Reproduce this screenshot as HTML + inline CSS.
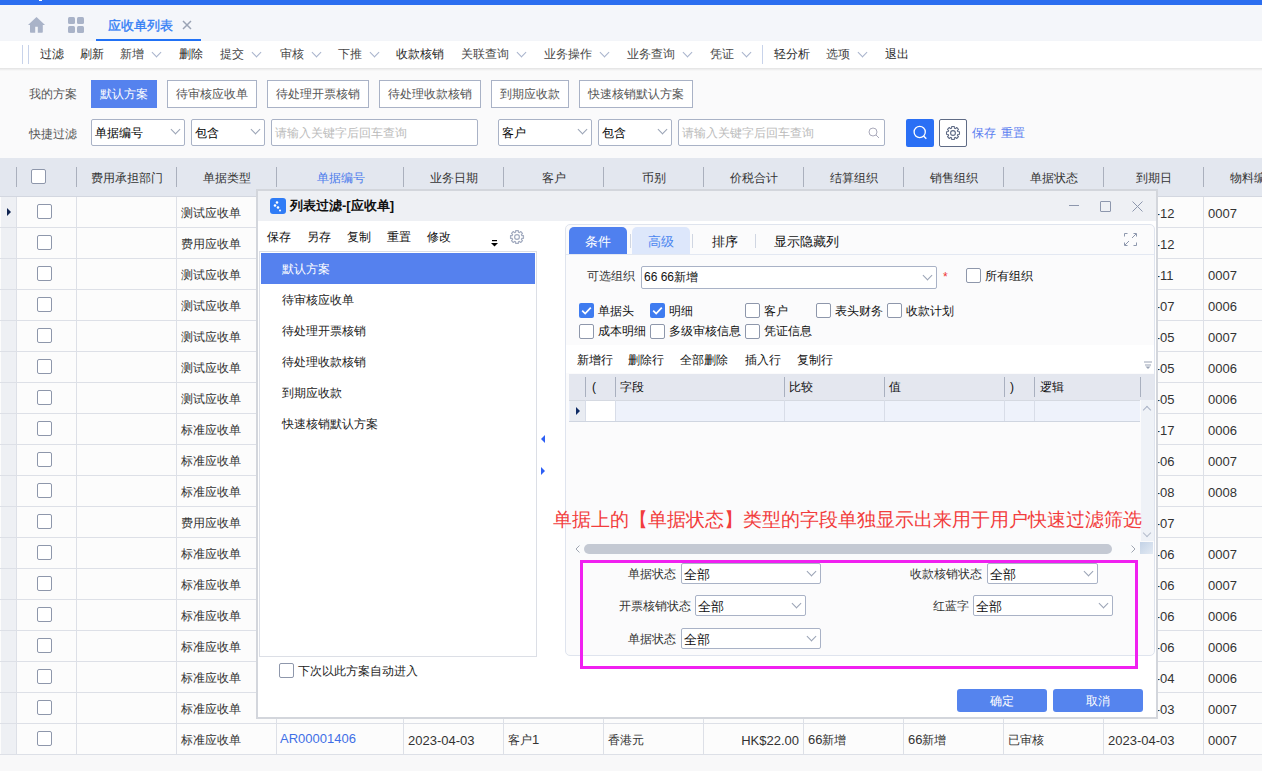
<!DOCTYPE html>
<html><head><meta charset="utf-8"><style>
*{box-sizing:border-box;margin:0;padding:0}
html,body{width:1262px;height:771px;overflow:hidden}
body{position:relative;background:#f8f8f9;font-family:"Liberation Sans",sans-serif;font-size:12px;color:#333}
.a{position:absolute}
.t{position:absolute;white-space:nowrap;line-height:16px}
.chev{position:absolute;width:7px;height:7px;border-right:1px solid #9aa3b5;border-bottom:1px solid #9aa3b5;transform:rotate(45deg)}
.btn{position:absolute;top:80px;height:28px;border:1px solid #a9b2c6;background:#fff;color:#555;text-align:center;line-height:26px;font-size:12px;white-space:nowrap}
.sel{position:absolute;top:119px;height:27px;border:1px solid #a9b2c6;border-radius:2px;background:#fff;line-height:27px;padding-left:3px;font-size:12px;color:#000;white-space:nowrap}
.hd{position:absolute;top:166px;width:1px;height:22px;background:#c4c9d4}
.ht{position:absolute;top:159px;height:38px;line-height:38px;text-align:center;font-size:12px;color:#333;white-space:nowrap}
.cb{position:absolute;width:15px;height:15px;border:1px solid #8e97ab;border-radius:2px;background:#fff}
</style></head><body>
<div class="a" style="left:0px;top:0px;width:1262px;height:5px;background:#2b6ef0"></div>
<div class="a" style="left:0px;top:5px;width:1262px;height:36px;background:#f4f6fa"></div>
<div class="a" style="left:39px;top:0px;width:3px;height:1px;background:#fff"></div>
<svg class="a" style="left:27px;top:16px" width="19" height="18" viewBox="0 0 19 18"><path d="M9.5 1 L1 8.9 L3 8.9 L3 16 Q3 16.8 3.8 16.8 L8.2 16.8 L8.2 10.8 L10.8 10.8 L10.8 16.8 L15 16.8 Q15.8 16.8 15.8 16 L15.8 8.9 L18 8.9 Z" fill="#a9b3c8"/></svg>
<svg class="a" style="left:68px;top:17px" width="16" height="16" viewBox="0 0 16 16"><rect x="0" y="0" width="7" height="7" rx="1.5" fill="#a9b3c8"/><rect x="9" y="0" width="7" height="7" rx="1.5" fill="#a9b3c8"/><rect x="0" y="9" width="7" height="7" rx="1.5" fill="#a9b3c8"/><rect x="9" y="9" width="7" height="7" rx="1.5" fill="#a9b3c8"/></svg>
<div class="t" style="left:108px;top:18px;font-size:13px;color:#3580f5;-webkit-text-stroke:0.35px #3580f5">应收单列表</div>
<svg class="a" style="left:182px;top:20px" width="10" height="10" viewBox="0 0 10 10"><path d="M1 1L9 9M9 1L1 9" stroke="#9aa3b4" stroke-width="1.5"/></svg>
<div class="a" style="left:96px;top:39px;width:105px;height:2px;background:#2272f6"></div>
<div class="a" style="left:0px;top:41px;width:1262px;height:27px;background:#fff;box-shadow:0 1px 2px rgba(0,0,0,0.08)"></div>
<div class="a" style="left:22px;top:45px;width:1px;height:19px;background:#c8d3ea"></div>
<div class="a" style="left:28px;top:45px;width:1px;height:19px;background:#c8d3ea"></div>
<div class="t" style="left:40px;top:46px;font-size:12px;color:#2a2a2a">过滤</div>
<div class="t" style="left:80px;top:46px;font-size:12px;color:#2a2a2a">刷新</div>
<div class="t" style="left:120px;top:46px;font-size:12px;color:#474747">新增</div>
<div class="chev" style="left:153px;top:49px;width:7px;height:7px;border-color:#a8b3cc"></div>
<div class="t" style="left:179px;top:46px;font-size:12px;color:#2a2a2a">删除</div>
<div class="t" style="left:220px;top:46px;font-size:12px;color:#474747">提交</div>
<div class="chev" style="left:253px;top:49px;width:7px;height:7px;border-color:#a8b3cc"></div>
<div class="t" style="left:280px;top:46px;font-size:12px;color:#474747">审核</div>
<div class="chev" style="left:313px;top:49px;width:7px;height:7px;border-color:#a8b3cc"></div>
<div class="t" style="left:338px;top:46px;font-size:12px;color:#474747">下推</div>
<div class="chev" style="left:371px;top:49px;width:7px;height:7px;border-color:#a8b3cc"></div>
<div class="t" style="left:396px;top:46px;font-size:12px;color:#2a2a2a">收款核销</div>
<div class="t" style="left:461px;top:46px;font-size:12px;color:#474747">关联查询</div>
<div class="chev" style="left:518px;top:49px;width:7px;height:7px;border-color:#a8b3cc"></div>
<div class="t" style="left:544px;top:46px;font-size:12px;color:#474747">业务操作</div>
<div class="chev" style="left:601px;top:49px;width:7px;height:7px;border-color:#a8b3cc"></div>
<div class="t" style="left:627px;top:46px;font-size:12px;color:#474747">业务查询</div>
<div class="chev" style="left:684px;top:49px;width:7px;height:7px;border-color:#a8b3cc"></div>
<div class="t" style="left:710px;top:46px;font-size:12px;color:#474747">凭证</div>
<div class="chev" style="left:743px;top:49px;width:7px;height:7px;border-color:#a8b3cc"></div>
<div class="t" style="left:774px;top:46px;font-size:12px;color:#2a2a2a">轻分析</div>
<div class="t" style="left:826px;top:46px;font-size:12px;color:#474747">选项</div>
<div class="chev" style="left:859px;top:49px;width:7px;height:7px;border-color:#a8b3cc"></div>
<div class="t" style="left:885px;top:46px;font-size:12px;color:#2a2a2a">退出</div>
<div class="a" style="left:762px;top:45px;width:1px;height:19px;background:#c8d3ea"></div>
<div class="a" style="left:0px;top:68px;width:1262px;height:90px;background:#fafafb"></div>
<div class="a" style="left:0px;top:68px;width:1262px;height:3px;background:linear-gradient(#e2e2e2,#fafafb)"></div>
<div class="t" style="left:29px;top:86px;color:#555">我的方案</div>
<div class="btn" style="left:91px;width:66px;background:#5582ee;border-color:#5582ee;color:#fff">默认方案</div>
<div class="btn" style="left:167px;width:90px;">待审核应收单</div>
<div class="btn" style="left:267px;width:102px;">待处理开票核销</div>
<div class="btn" style="left:379px;width:102px;">待处理收款核销</div>
<div class="btn" style="left:491px;width:78px;">到期应收款</div>
<div class="btn" style="left:579px;width:114px;">快速核销默认方案</div>
<div class="t" style="left:29px;top:126px;color:#555">快捷过滤</div>
<div class="sel" style="left:91px;width:94px;">单据编号<div class="chev" style="right:5px;top:6px"></div></div>
<div class="sel" style="left:191px;width:74px;">包含<div class="chev" style="right:5px;top:6px"></div></div>
<div class="sel" style="left:271px;width:207px;color:#bbb">请输入关键字后回车查询</div>
<div class="sel" style="left:498px;width:94px;">客户<div class="chev" style="right:5px;top:6px"></div></div>
<div class="sel" style="left:598px;width:74px;">包含<div class="chev" style="right:5px;top:6px"></div></div>
<div class="sel" style="left:678px;width:207px;color:#bbb">请输入关键字后回车查询<svg class="a" style="right:4px;top:7px" width="12" height="12" viewBox="0 0 12 12"><circle cx="5" cy="5" r="4" fill="none" stroke="#aab" stroke-width="1"/><path d="M8 8L11 11" stroke="#aab" stroke-width="1"/></svg></div>
<div class="a" style="left:906px;top:119px;width:28px;height:28px;background:#2a6ff5;border-radius:2px"></div>
<svg class="a" style="left:912px;top:125px" width="16" height="16" viewBox="0 0 16 16"><circle cx="7.7" cy="7" r="5.6" fill="none" stroke="#fff" stroke-width="1.3"/><path d="M11.6 11L14.3 13.7" stroke="#fff" stroke-width="1.4"/></svg>
<div class="a" style="left:939px;top:119px;width:28px;height:28px;border:1px solid #5f6b85;border-radius:2px;background:#fff"></div>
<svg class="a" style="left:945px;top:125px" width="16" height="16" viewBox="0 0 16 16"><path d="M6.57 3.21 L6.71 1.53 L9.29 1.53 L9.43 3.21 L10.37 3.60 L11.67 2.51 L13.49 4.33 L12.40 5.63 L12.79 6.57 L14.47 6.71 L14.47 9.29 L12.79 9.43 L12.40 10.37 L13.49 11.67 L11.67 13.49 L10.37 12.40 L9.43 12.79 L9.29 14.47 L6.71 14.47 L6.57 12.79 L5.63 12.40 L4.33 13.49 L2.51 11.67 L3.60 10.37 L3.21 9.43 L1.53 9.29 L1.53 6.71 L3.21 6.57 L3.60 5.63 L2.51 4.33 L4.33 2.51 L5.63 3.60Z" fill="none" stroke="#5f6b85" stroke-width="1.1" stroke-linejoin="round"/><circle cx="8" cy="8" r="2.4" fill="none" stroke="#5f6b85" stroke-width="1.1"/></svg>
<div class="t" style="left:972px;top:125px;color:#5b7ef0">保存</div>
<div class="t" style="left:1001px;top:125px;color:#5b7ef0">重置</div>
<div class="a" style="left:0px;top:158px;width:1262px;height:38px;background:#e3e7ef"></div>
<div class="a" style="left:16px;top:167px;width:1px;height:20px;background:#aab0bd"></div>
<div class="a" style="left:76px;top:167px;width:1px;height:20px;background:#aab0bd"></div>
<div class="a" style="left:176px;top:167px;width:1px;height:20px;background:#aab0bd"></div>
<div class="a" style="left:276px;top:167px;width:1px;height:20px;background:#aab0bd"></div>
<div class="a" style="left:403px;top:167px;width:1px;height:20px;background:#aab0bd"></div>
<div class="a" style="left:503px;top:167px;width:1px;height:20px;background:#aab0bd"></div>
<div class="a" style="left:603px;top:167px;width:1px;height:20px;background:#aab0bd"></div>
<div class="a" style="left:703px;top:167px;width:1px;height:20px;background:#aab0bd"></div>
<div class="a" style="left:803px;top:167px;width:1px;height:20px;background:#aab0bd"></div>
<div class="a" style="left:903px;top:167px;width:1px;height:20px;background:#aab0bd"></div>
<div class="a" style="left:1003px;top:167px;width:1px;height:20px;background:#aab0bd"></div>
<div class="a" style="left:1103px;top:167px;width:1px;height:20px;background:#aab0bd"></div>
<div class="a" style="left:1203px;top:167px;width:1px;height:20px;background:#aab0bd"></div>
<div class="ht" style="left:77px;width:100px;color:#333">费用承担部门</div>
<div class="ht" style="left:177px;width:100px;color:#333">单据类型</div>
<div class="ht" style="left:277px;width:127px;color:#4b7bec">单据编号</div>
<div class="ht" style="left:404px;width:100px;color:#333">业务日期</div>
<div class="ht" style="left:504px;width:100px;color:#333">客户</div>
<div class="ht" style="left:604px;width:100px;color:#333">币别</div>
<div class="ht" style="left:704px;width:100px;color:#333">价税合计</div>
<div class="ht" style="left:804px;width:100px;color:#333">结算组织</div>
<div class="ht" style="left:904px;width:100px;color:#333">销售组织</div>
<div class="ht" style="left:1004px;width:100px;color:#333">单据状态</div>
<div class="ht" style="left:1104px;width:100px;color:#333">到期日</div>
<div class="ht" style="left:1204px;width:100px;color:#333">物料编码</div>
<div class="cb" style="left:31px;top:169px"></div>
<div class="a" style="left:0px;top:196px;width:1262px;height:1px;background:#d3d7e0"></div>
<div class="a" style="left:0px;top:197px;width:1262px;height:558px;background:#fcfcfc"></div>
<div class="a" style="left:1px;top:197px;width:15px;height:558px;background:#eef0f4"></div>
<div class="a" style="left:0px;top:227px;width:1262px;height:1px;background:#dde0e7"></div>
<div class="cb" style="left:37px;top:204px"></div>
<div class="t" style="left:181px;top:205px;color:#333">测试应收单</div>
<div class="t" style="left:1108px;top:206px;font-size:13px;color:#333">2023-04-12</div>
<div class="t" style="left:1208px;top:206px;font-size:13px;color:#333">0007</div>
<div class="a" style="left:0px;top:258px;width:1262px;height:1px;background:#dde0e7"></div>
<div class="cb" style="left:37px;top:235px"></div>
<div class="t" style="left:181px;top:236px;color:#333">费用应收单</div>
<div class="t" style="left:1108px;top:237px;font-size:13px;color:#333">2023-04-12</div>
<div class="t" style="left:1208px;top:237px;font-size:13px;color:#333"></div>
<div class="a" style="left:0px;top:289px;width:1262px;height:1px;background:#dde0e7"></div>
<div class="cb" style="left:37px;top:266px"></div>
<div class="t" style="left:181px;top:267px;color:#333">测试应收单</div>
<div class="t" style="left:1108px;top:268px;font-size:13px;color:#333">2023-04-11</div>
<div class="t" style="left:1208px;top:268px;font-size:13px;color:#333">0007</div>
<div class="a" style="left:0px;top:320px;width:1262px;height:1px;background:#dde0e7"></div>
<div class="cb" style="left:37px;top:297px"></div>
<div class="t" style="left:181px;top:298px;color:#333">测试应收单</div>
<div class="t" style="left:1108px;top:299px;font-size:13px;color:#333">2023-04-07</div>
<div class="t" style="left:1208px;top:299px;font-size:13px;color:#333">0006</div>
<div class="a" style="left:0px;top:351px;width:1262px;height:1px;background:#dde0e7"></div>
<div class="cb" style="left:37px;top:328px"></div>
<div class="t" style="left:181px;top:329px;color:#333">测试应收单</div>
<div class="t" style="left:1108px;top:330px;font-size:13px;color:#333">2023-04-05</div>
<div class="t" style="left:1208px;top:330px;font-size:13px;color:#333">0007</div>
<div class="a" style="left:0px;top:382px;width:1262px;height:1px;background:#dde0e7"></div>
<div class="cb" style="left:37px;top:359px"></div>
<div class="t" style="left:181px;top:360px;color:#333">测试应收单</div>
<div class="t" style="left:1108px;top:361px;font-size:13px;color:#333">2023-04-05</div>
<div class="t" style="left:1208px;top:361px;font-size:13px;color:#333">0006</div>
<div class="a" style="left:0px;top:413px;width:1262px;height:1px;background:#dde0e7"></div>
<div class="cb" style="left:37px;top:390px"></div>
<div class="t" style="left:181px;top:391px;color:#333">测试应收单</div>
<div class="t" style="left:1108px;top:392px;font-size:13px;color:#333">2023-04-05</div>
<div class="t" style="left:1208px;top:392px;font-size:13px;color:#333">0006</div>
<div class="a" style="left:0px;top:444px;width:1262px;height:1px;background:#dde0e7"></div>
<div class="cb" style="left:37px;top:421px"></div>
<div class="t" style="left:181px;top:422px;color:#333">标准应收单</div>
<div class="t" style="left:1108px;top:423px;font-size:13px;color:#333">2023-04-17</div>
<div class="t" style="left:1208px;top:423px;font-size:13px;color:#333">0006</div>
<div class="a" style="left:0px;top:475px;width:1262px;height:1px;background:#dde0e7"></div>
<div class="cb" style="left:37px;top:452px"></div>
<div class="t" style="left:181px;top:453px;color:#333">标准应收单</div>
<div class="t" style="left:1108px;top:454px;font-size:13px;color:#333">2023-04-06</div>
<div class="t" style="left:1208px;top:454px;font-size:13px;color:#333">0007</div>
<div class="a" style="left:0px;top:506px;width:1262px;height:1px;background:#dde0e7"></div>
<div class="cb" style="left:37px;top:483px"></div>
<div class="t" style="left:181px;top:484px;color:#333">标准应收单</div>
<div class="t" style="left:1108px;top:485px;font-size:13px;color:#333">2023-04-08</div>
<div class="t" style="left:1208px;top:485px;font-size:13px;color:#333">0008</div>
<div class="a" style="left:0px;top:537px;width:1262px;height:1px;background:#dde0e7"></div>
<div class="cb" style="left:37px;top:514px"></div>
<div class="t" style="left:181px;top:515px;color:#333">费用应收单</div>
<div class="t" style="left:1108px;top:516px;font-size:13px;color:#333">2023-04-07</div>
<div class="t" style="left:1208px;top:516px;font-size:13px;color:#333"></div>
<div class="a" style="left:0px;top:568px;width:1262px;height:1px;background:#dde0e7"></div>
<div class="cb" style="left:37px;top:545px"></div>
<div class="t" style="left:181px;top:546px;color:#333">标准应收单</div>
<div class="t" style="left:1108px;top:547px;font-size:13px;color:#333">2023-04-06</div>
<div class="t" style="left:1208px;top:547px;font-size:13px;color:#333">0007</div>
<div class="a" style="left:0px;top:599px;width:1262px;height:1px;background:#dde0e7"></div>
<div class="cb" style="left:37px;top:576px"></div>
<div class="t" style="left:181px;top:577px;color:#333">标准应收单</div>
<div class="t" style="left:1108px;top:578px;font-size:13px;color:#333">2023-04-06</div>
<div class="t" style="left:1208px;top:578px;font-size:13px;color:#333">0007</div>
<div class="a" style="left:0px;top:630px;width:1262px;height:1px;background:#dde0e7"></div>
<div class="cb" style="left:37px;top:607px"></div>
<div class="t" style="left:181px;top:608px;color:#333">标准应收单</div>
<div class="t" style="left:1108px;top:609px;font-size:13px;color:#333">2023-04-06</div>
<div class="t" style="left:1208px;top:609px;font-size:13px;color:#333">0006</div>
<div class="a" style="left:0px;top:661px;width:1262px;height:1px;background:#dde0e7"></div>
<div class="cb" style="left:37px;top:638px"></div>
<div class="t" style="left:181px;top:639px;color:#333">标准应收单</div>
<div class="t" style="left:1108px;top:640px;font-size:13px;color:#333">2023-04-06</div>
<div class="t" style="left:1208px;top:640px;font-size:13px;color:#333">0006</div>
<div class="a" style="left:0px;top:692px;width:1262px;height:1px;background:#dde0e7"></div>
<div class="cb" style="left:37px;top:669px"></div>
<div class="t" style="left:181px;top:670px;color:#333">标准应收单</div>
<div class="t" style="left:1108px;top:671px;font-size:13px;color:#333">2023-04-04</div>
<div class="t" style="left:1208px;top:671px;font-size:13px;color:#333">0006</div>
<div class="a" style="left:0px;top:723px;width:1262px;height:1px;background:#dde0e7"></div>
<div class="cb" style="left:37px;top:700px"></div>
<div class="t" style="left:181px;top:701px;color:#333">标准应收单</div>
<div class="t" style="left:1108px;top:702px;font-size:13px;color:#333">2023-04-03</div>
<div class="t" style="left:1208px;top:702px;font-size:13px;color:#333">0007</div>
<div class="a" style="left:0px;top:754px;width:1262px;height:1px;background:#dde0e7"></div>
<div class="cb" style="left:37px;top:731px"></div>
<div class="t" style="left:181px;top:732px;color:#333">标准应收单</div>
<div class="t" style="left:1108px;top:733px;font-size:13px;color:#333">2023-04-03</div>
<div class="t" style="left:1208px;top:733px;font-size:13px;color:#333">0007</div>
<div class="a" style="left:16px;top:197px;width:1px;height:558px;background:#dde0e7"></div>
<div class="a" style="left:76px;top:197px;width:1px;height:558px;background:#dde0e7"></div>
<div class="a" style="left:176px;top:197px;width:1px;height:558px;background:#dde0e7"></div>
<div class="a" style="left:276px;top:197px;width:1px;height:558px;background:#dde0e7"></div>
<div class="a" style="left:403px;top:197px;width:1px;height:558px;background:#dde0e7"></div>
<div class="a" style="left:503px;top:197px;width:1px;height:558px;background:#dde0e7"></div>
<div class="a" style="left:603px;top:197px;width:1px;height:558px;background:#dde0e7"></div>
<div class="a" style="left:703px;top:197px;width:1px;height:558px;background:#dde0e7"></div>
<div class="a" style="left:803px;top:197px;width:1px;height:558px;background:#dde0e7"></div>
<div class="a" style="left:903px;top:197px;width:1px;height:558px;background:#dde0e7"></div>
<div class="a" style="left:1003px;top:197px;width:1px;height:558px;background:#dde0e7"></div>
<div class="a" style="left:1103px;top:197px;width:1px;height:558px;background:#dde0e7"></div>
<div class="a" style="left:1203px;top:197px;width:1px;height:558px;background:#dde0e7"></div>
<svg class="a" style="left:7px;top:208px" width="4" height="8" viewBox="0 0 4 8"><path d="M0 0L4 4L0 8Z" fill="#0f2350"/></svg>
<div class="t" style="left:280px;top:731px;font-size:13px;color:#3f6fe6">AR00001406</div>
<div class="t" style="left:408px;top:733px;font-size:13px">2023-04-03</div>
<div class="t" style="left:508px;top:732px;">客户<span style='font-size:13px'>1</span></div>
<div class="t" style="left:608px;top:732px;">香港元</div>
<div class="t" style="left:703px;top:733px;width:96px;text-align:right;font-size:13px">HK$22.00</div>
<div class="t" style="left:808px;top:732px;"><span style='font-size:13px'>66</span>新增</div>
<div class="t" style="left:908px;top:732px;"><span style='font-size:13px'>66</span>新增</div>
<div class="t" style="left:1008px;top:732px;">已审核</div>
<div class="a" style="left:256px;top:189px;width:902px;height:530px;background:#fff;border:2px solid #d3d6dc"></div>
<div class="a" style="left:258px;top:191px;width:898px;height:30px;background:#eef0f4"></div>
<svg class="a" style="left:270px;top:198px" width="16" height="16" viewBox="0 0 16 16"><rect width="16" height="16" rx="3" fill="#2f7cf6"/><circle cx="7" cy="4.5" r="1.3" fill="#fff"/><circle cx="5" cy="7.5" r="1.3" fill="#fff"/><circle cx="8" cy="9.5" r="1.3" fill="#fff"/><circle cx="10" cy="12.5" r="1" fill="#fff"/></svg>
<div class="t" style="left:290px;top:198px;font-size:13px;font-weight:bold;color:#111">列表过滤-[应收单]</div>
<div class="a" style="left:1069px;top:205px;width:10px;height:1px;background:#8d97ad"></div>
<div class="a" style="left:1100px;top:201px;width:11px;height:11px;border:1px solid #8d97ad;border-radius:1px"></div>
<svg class="a" style="left:1132px;top:201px" width="11" height="11" viewBox="0 0 11 11"><path d="M0.5 0.5L10.5 10.5M10.5 0.5L0.5 10.5" stroke="#8d97ad" stroke-width="1"/></svg>
<div class="t" style="left:267px;top:229px;font-size:12px;color:#111">保存</div>
<div class="t" style="left:307px;top:229px;font-size:12px;color:#111">另存</div>
<div class="t" style="left:347px;top:229px;font-size:12px;color:#111">复制</div>
<div class="t" style="left:387px;top:229px;font-size:12px;color:#111">重置</div>
<div class="t" style="left:427px;top:229px;font-size:12px;color:#111">修改</div>
<svg class="a" style="left:491px;top:240px" width="7" height="7" viewBox="0 0 7 7"><rect x="1" y="0" width="5" height="1.2" fill="#000"/><path d="M0 3L7 3L3.5 6.5Z" fill="#000"/></svg>
<svg class="a" style="left:509px;top:229px" width="16" height="16" viewBox="0 0 16 16"><path d="M6.57 3.21 L6.71 1.53 L9.29 1.53 L9.43 3.21 L10.37 3.60 L11.67 2.51 L13.49 4.33 L12.40 5.63 L12.79 6.57 L14.47 6.71 L14.47 9.29 L12.79 9.43 L12.40 10.37 L13.49 11.67 L11.67 13.49 L10.37 12.40 L9.43 12.79 L9.29 14.47 L6.71 14.47 L6.57 12.79 L5.63 12.40 L4.33 13.49 L2.51 11.67 L3.60 10.37 L3.21 9.43 L1.53 9.29 L1.53 6.71 L3.21 6.57 L3.60 5.63 L2.51 4.33 L4.33 2.51 L5.63 3.60Z" fill="none" stroke="#a3acc0" stroke-width="1.2" stroke-linejoin="round"/><circle cx="8" cy="8" r="2.4" fill="none" stroke="#a3acc0" stroke-width="1.2"/></svg>
<div class="a" style="left:259px;top:251px;width:278px;height:406px;border:1px solid #dcdfe6;background:#fff"></div>
<div class="a" style="left:261px;top:253px;width:274px;height:31px;background:#5581ee"></div>
<div class="t" style="left:282px;top:261px;font-size:12px;color:#fff">默认方案</div>
<div class="t" style="left:282px;top:292px;font-size:12px;color:#222">待审核应收单</div>
<div class="t" style="left:282px;top:323px;font-size:12px;color:#222">待处理开票核销</div>
<div class="t" style="left:282px;top:354px;font-size:12px;color:#222">待处理收款核销</div>
<div class="t" style="left:282px;top:385px;font-size:12px;color:#222">到期应收款</div>
<div class="t" style="left:282px;top:416px;font-size:12px;color:#222">快速核销默认方案</div>
<div class="cb" style="left:279px;top:663px"></div>
<div class="t" style="left:298px;top:663px;font-size:12px;color:#222">下次以此方案自动进入</div>
<svg class="a" style="left:541px;top:435px" width="4" height="8" viewBox="0 0 4 8"><path d="M4 0L0 4L4 8Z" fill="#2d5ff4"/></svg>
<svg class="a" style="left:541px;top:467px" width="4" height="8" viewBox="0 0 4 8"><path d="M0 0L4 4L0 8Z" fill="#2d5ff4"/></svg>
<div class="a" style="left:565px;top:224px;width:590px;height:432px;border:1px solid #dfe4ee;border-radius:5px;background:#fbfbfc"></div>
<div class="a" style="left:566px;top:254px;width:588px;height:1px;background:#e3e8f2"></div>
<div class="a" style="left:569px;top:227px;width:58px;height:27px;background:#4f80ef;border-radius:5px 5px 0 0"></div>
<div class="t" style="left:585px;top:234px;font-size:13px;color:#fff">条件</div>
<div class="a" style="left:632px;top:227px;width:58px;height:27px;background:#dde7fb;border-radius:5px 5px 0 0"></div>
<div class="t" style="left:648px;top:234px;font-size:13px;color:#4b86f0">高级</div>
<div class="a" style="left:630px;top:234px;width:1px;height:14px;background:#d0d6e2"></div>
<div class="a" style="left:692px;top:234px;width:1px;height:14px;background:#d0d6e2"></div>
<div class="a" style="left:755px;top:234px;width:1px;height:14px;background:#d0d6e2"></div>
<div class="t" style="left:712px;top:234px;font-size:13px;color:#111">排序</div>
<div class="t" style="left:774px;top:234px;font-size:13px;color:#111">显示隐藏列</div>
<svg class="a" style="left:1124px;top:233px" width="13" height="13" viewBox="0 0 13 13"><path d="M0.5 3.5V0.5H3.5M9.5 0.5H12.5V3.5M12.5 9.5V12.5H9.5M3.5 12.5H0.5V9.5" fill="none" stroke="#8d97ad"/><path d="M8 5L12 1M5 8L1 12" stroke="#8d97ad"/></svg>
<div class="t" style="left:587px;top:268px;font-size:12px;color:#333">可选组织</div>
<div class="a" style="left:641px;top:266px;width:296px;height:23px;border:1px solid #a9b2c6;border-radius:2px;background:#fff"></div>
<div class="t" style="left:644px;top:269px;font-size:12px;color:#111">66 66新增</div>
<div class="chev" style="left:924px;top:272px;width:7px;height:7px;border-color:#9aa3b5"></div>
<div class="t" style="left:943px;top:269px;font-size:12px;color:#e33">*</div>
<div class="cb" style="left:966px;top:268px;width:15px;height:15px"></div>
<div class="t" style="left:985px;top:268px;font-size:12px;color:#111">所有组织</div>
<svg class="a" style="left:579px;top:303px" width="15" height="15" viewBox="0 0 15 15"><rect width="15" height="15" rx="2" fill="#3f7cf0"/><path d="M3.2 7.6L6.2 10.6L11.8 4.6" fill="none" stroke="#fff" stroke-width="1.7"/></svg>
<div class="t" style="left:598px;top:303px;font-size:12px;color:#111">单据头</div>
<svg class="a" style="left:650px;top:303px" width="15" height="15" viewBox="0 0 15 15"><rect width="15" height="15" rx="2" fill="#3f7cf0"/><path d="M3.2 7.6L6.2 10.6L11.8 4.6" fill="none" stroke="#fff" stroke-width="1.7"/></svg>
<div class="t" style="left:669px;top:303px;font-size:12px;color:#111">明细</div>
<div class="cb" style="left:745px;top:303px;width:15px;height:15px"></div>
<div class="t" style="left:764px;top:303px;font-size:12px;color:#111">客户</div>
<div class="cb" style="left:816px;top:303px;width:15px;height:15px"></div>
<div class="t" style="left:835px;top:303px;font-size:12px;color:#111">表头财务</div>
<div class="cb" style="left:887px;top:303px;width:15px;height:15px"></div>
<div class="t" style="left:906px;top:303px;font-size:12px;color:#111">收款计划</div>
<div class="cb" style="left:579px;top:324px;width:15px;height:15px"></div>
<div class="t" style="left:598px;top:323px;font-size:12px;color:#111">成本明细</div>
<div class="cb" style="left:650px;top:324px;width:15px;height:15px"></div>
<div class="t" style="left:669px;top:323px;font-size:12px;color:#111">多级审核信息</div>
<div class="cb" style="left:745px;top:324px;width:15px;height:15px"></div>
<div class="t" style="left:764px;top:323px;font-size:12px;color:#111">凭证信息</div>
<div class="a" style="left:566px;top:345px;width:588px;height:28px;background:#fff"></div>
<div class="t" style="left:577px;top:352px;font-size:12px;color:#111">新增行</div>
<div class="t" style="left:628px;top:352px;font-size:12px;color:#111">删除行</div>
<div class="t" style="left:680px;top:352px;font-size:12px;color:#111">全部删除</div>
<div class="t" style="left:745px;top:352px;font-size:12px;color:#111">插入行</div>
<div class="t" style="left:797px;top:352px;font-size:12px;color:#111">复制行</div>
<svg class="a" style="left:1144px;top:361px" width="8" height="8" viewBox="0 0 8 8"><path d="M0 1H8M1 4H7" stroke="#9aa3b5"/><path d="M1.5 5.5H6.5L4 8Z" fill="#9aa3b5"/></svg>
<div class="a" style="left:569px;top:374px;width:585px;height:26px;background:#e4e7ef"></div>
<div class="a" style="left:585px;top:377px;width:1px;height:20px;background:#a9b0bf"></div>
<div class="a" style="left:615px;top:377px;width:1px;height:20px;background:#a9b0bf"></div>
<div class="a" style="left:784px;top:377px;width:1px;height:20px;background:#a9b0bf"></div>
<div class="a" style="left:884px;top:377px;width:1px;height:20px;background:#a9b0bf"></div>
<div class="a" style="left:1004px;top:377px;width:1px;height:20px;background:#a9b0bf"></div>
<div class="a" style="left:1034px;top:377px;width:1px;height:20px;background:#a9b0bf"></div>
<div class="a" style="left:1140px;top:377px;width:1px;height:20px;background:#a9b0bf"></div>
<div class="t" style="left:592px;top:379px;font-size:12px;color:#111">(</div>
<div class="t" style="left:620px;top:379px;font-size:12px;color:#111">字段</div>
<div class="t" style="left:789px;top:379px;font-size:12px;color:#111">比较</div>
<div class="t" style="left:889px;top:379px;font-size:12px;color:#111">值</div>
<div class="t" style="left:1010px;top:379px;font-size:12px;color:#111">)</div>
<div class="t" style="left:1040px;top:379px;font-size:12px;color:#111">逻辑</div>
<div class="a" style="left:569px;top:400px;width:571px;height:21px;background:#eef2fb"></div>
<div class="a" style="left:570px;top:401px;width:15px;height:20px;background:#e9ecf2"></div>
<div class="a" style="left:585px;top:400px;width:30px;height:21px;background:#fff"></div>
<div class="a" style="left:569px;top:400px;width:571px;height:1px;background:#d5d9e1"></div>
<div class="a" style="left:585px;top:400px;width:1px;height:21px;background:#d8dde8"></div>
<div class="a" style="left:615px;top:400px;width:1px;height:21px;background:#d8dde8"></div>
<div class="a" style="left:784px;top:400px;width:1px;height:21px;background:#d8dde8"></div>
<div class="a" style="left:884px;top:400px;width:1px;height:21px;background:#d8dde8"></div>
<div class="a" style="left:1004px;top:400px;width:1px;height:21px;background:#d8dde8"></div>
<div class="a" style="left:1034px;top:400px;width:1px;height:21px;background:#d8dde8"></div>
<div class="a" style="left:569px;top:421px;width:571px;height:1px;background:#cfd5e0"></div>
<svg class="a" style="left:576px;top:407px" width="4" height="8" viewBox="0 0 4 8"><path d="M0 0L4 4L0 8Z" fill="#0e2a64"/></svg>
<div class="a" style="left:1141px;top:400px;width:13px;height:141px;background:#eff2f7"></div>
<div class="chev" style="left:1144px;top:407px;width:6px;height:6px;border-color:#aab3c6;transform:rotate(-135deg)"></div>
<div class="a" style="left:569px;top:542px;width:571px;height:14px;background:#fafbfc"></div>
<div class="chev" style="left:1144px;top:530px;width:6px;height:6px;border-color:#b5bdcc"></div>
<div class="a" style="left:584px;top:544px;width:528px;height:10px;background:#c4c9d3;border-radius:5px"></div>
<svg class="a" style="left:575px;top:545px" width="5" height="8" viewBox="0 0 5 8"><path d="M4.5 0.5L1 4L4.5 7.5" fill="none" stroke="#a0a6b2" stroke-width="1"/></svg>
<svg class="a" style="left:1131px;top:545px" width="5" height="8" viewBox="0 0 5 8"><path d="M0.5 0.5L4 4L0.5 7.5" fill="none" stroke="#a0a6b2" stroke-width="1"/></svg>
<div class="a" style="left:1140px;top:542px;width:13px;height:12px;background:linear-gradient(135deg,#c3d2e6,#e3eaf3)"></div>
<div class="t" style="left:628px;top:566px;font-size:12px;color:#333">单据状态</div>
<div class="a" style="left:681px;top:563px;width:140px;height:21px;border:1px solid #a9b2c6;border-radius:2px;background:#fff"></div>
<div class="t" style="left:684px;top:567px;font-size:13px;color:#111">全部</div>
<div class="chev" style="left:808px;top:568px;width:7px;height:7px;border-color:#9aa3b5"></div>
<div class="t" style="left:619px;top:598px;font-size:12px;color:#333">开票核销状态</div>
<div class="a" style="left:695px;top:595px;width:111px;height:21px;border:1px solid #a9b2c6;border-radius:2px;background:#fff"></div>
<div class="t" style="left:698px;top:599px;font-size:13px;color:#111">全部</div>
<div class="chev" style="left:793px;top:600px;width:7px;height:7px;border-color:#9aa3b5"></div>
<div class="t" style="left:628px;top:631px;font-size:12px;color:#333">单据状态</div>
<div class="a" style="left:681px;top:628px;width:140px;height:21px;border:1px solid #a9b2c6;border-radius:2px;background:#fff"></div>
<div class="t" style="left:684px;top:632px;font-size:13px;color:#111">全部</div>
<div class="chev" style="left:808px;top:633px;width:7px;height:7px;border-color:#9aa3b5"></div>
<div class="t" style="left:910px;top:566px;font-size:12px;color:#333">收款核销状态</div>
<div class="a" style="left:987px;top:563px;width:111px;height:21px;border:1px solid #a9b2c6;border-radius:2px;background:#fff"></div>
<div class="t" style="left:990px;top:567px;font-size:13px;color:#111">全部</div>
<div class="chev" style="left:1085px;top:568px;width:7px;height:7px;border-color:#9aa3b5"></div>
<div class="t" style="left:933px;top:598px;font-size:12px;color:#333">红蓝字</div>
<div class="a" style="left:973px;top:595px;width:140px;height:21px;border:1px solid #a9b2c6;border-radius:2px;background:#fff"></div>
<div class="t" style="left:976px;top:599px;font-size:13px;color:#111">全部</div>
<div class="chev" style="left:1100px;top:600px;width:7px;height:7px;border-color:#9aa3b5"></div>
<div class="a" style="left:957px;top:689px;width:90px;height:23px;background:#5584ee;border-radius:3px"></div>
<div class="a" style="left:1053px;top:689px;width:90px;height:23px;background:#5584ee;border-radius:3px"></div>
<div class="t" style="left:990px;top:693px;font-size:12px;color:#fff">确定</div>
<div class="t" style="left:1086px;top:693px;font-size:12px;color:#fff">取消</div>
<div class="t" style="left:553px;top:509px;font-size:19px;line-height:22px;color:#f23d3d">单据上的【单据状态】类型的字段单独显示出来用于用户快速过滤筛选</div>
<div class="a" style="left:580px;top:560px;width:558px;height:109px;border:3px solid #f020f0"></div>
</body></html>
